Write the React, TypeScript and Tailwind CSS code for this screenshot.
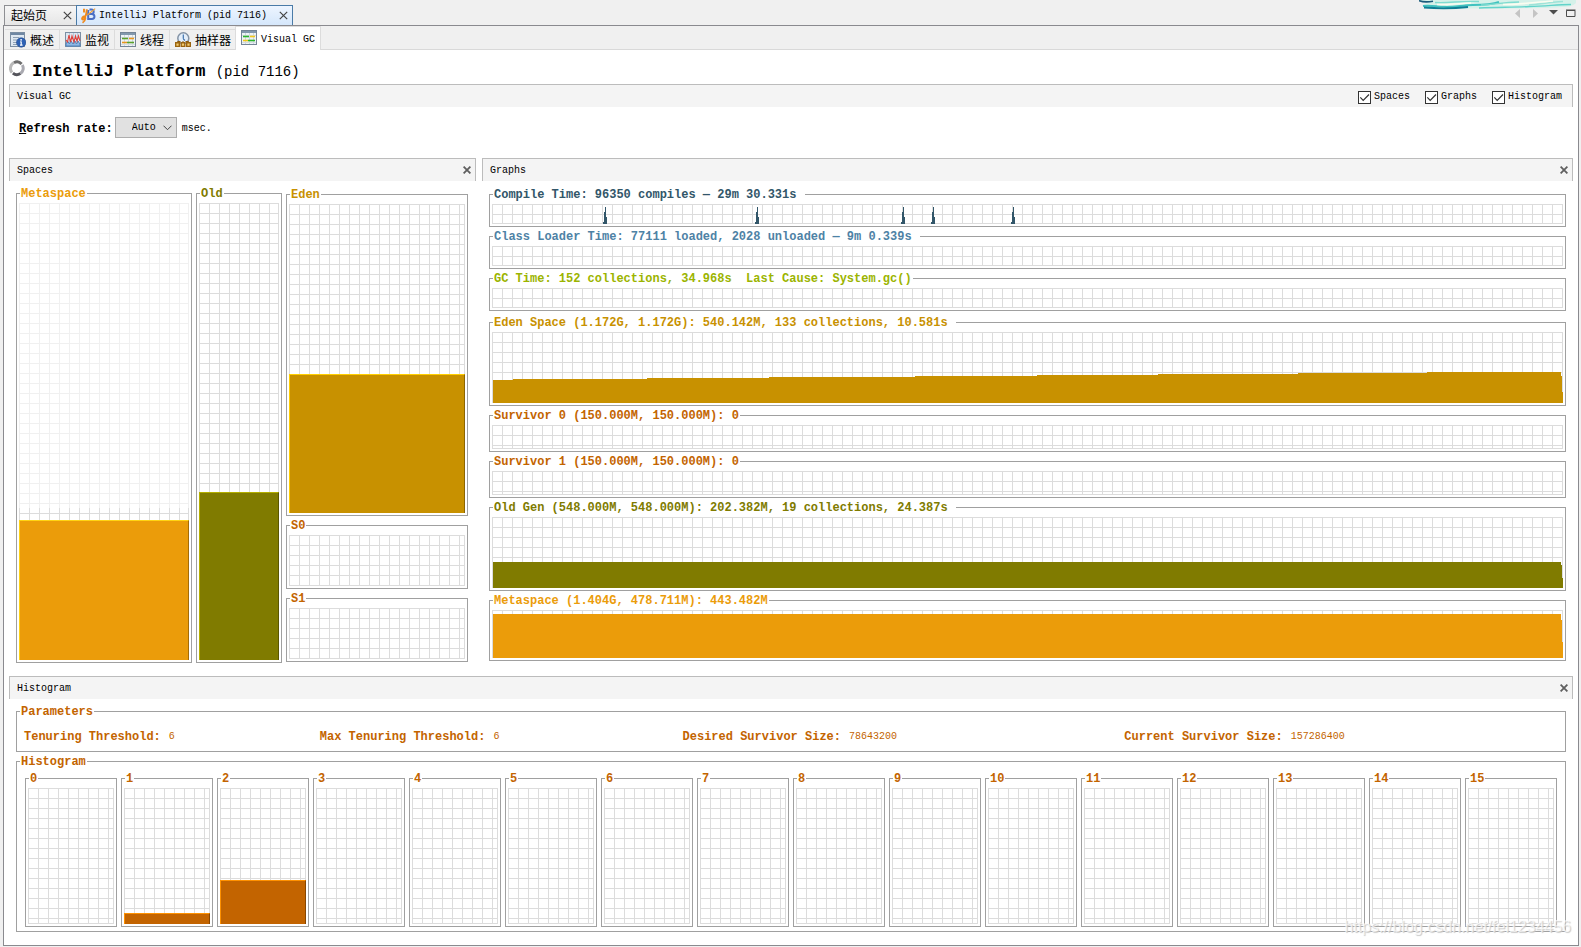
import { ReactNode, useState } from "react";

const GRID =
    "bg-[linear-gradient(to_right,#dcdcdc_1px,transparent_1px),linear-gradient(to_bottom,#dcdcdc_1px,transparent_1px)] bg-[size:10px_10px]";
const GRID_LIGHT =
    "bg-[linear-gradient(to_right,#f0f0f0_1px,transparent_1px),linear-gradient(to_bottom,#f0f0f0_1px,transparent_1px)] bg-[size:10px_10px]";

function Group({
    title,
    color,
    className = "",
    inner = "px-0.5 pt-[3px] pb-0.5",
    children,
}: {
    title: string;
    color: string;
    className?: string;
    inner?: string;
    children: ReactNode;
}) {
    return (
        <fieldset className={`min-w-0 border border-[#a0a0a0] ${className}`}>
            <legend
                className={`ml-[3px] px-px pt-0.5 text-[12px] leading-[11px] font-bold whitespace-pre ${color}`}
            >
                {title}
            </legend>
            <div className={inner}>{children}</div>
        </fieldset>
    );
}

function Grid({ className = "", children }: { className?: string; children?: ReactNode }) {
    return (
        <div
            className={`flex flex-col justify-end shadow-[inset_-1px_-1px_0_#dcdcdc] ${GRID} ${className}`}
        >
            {children}
        </div>
    );
}

function Fill({ percent, className }: { percent: number; className: string }) {
    return <div className={`border-x border-t ${className}`} style={{ height: `${percent}%` }} />;
}

function PanelHeader({ title, children }: { title: string; children?: ReactNode }) {
    return (
        <div className="flex h-[23px] items-center justify-between border-x border-t border-[#bcbcbc] bg-[#f4f4f4] pl-[7px]">
            <h2 className="pt-0.5">{title}</h2>
            {children}
        </div>
    );
}

function CloseButton({ label }: { label: string }) {
    return (
        <button type="button" aria-label={label} className="mr-1">
            <svg width="8" height="8" viewBox="0 0 8 8" stroke="#5f5f5f" strokeWidth="1.8">
                <path d="M.6.6l6.8 6.8M7.4.6L.6 7.4" />
            </svg>
        </button>
    );
}

function Check({ label }: { label: string }) {
    const [on, setOn] = useState(true);
    return (
        <label className="flex items-center gap-[3px]">
            <span className="grid size-[13px]">
                <input
                    type="checkbox"
                    checked={on}
                    onChange={(e) => setOn(e.target.checked)}
                    className="col-start-1 row-start-1 size-[13px] appearance-none border border-[#333333] bg-white"
                />
                {on && (
                    <svg
                        viewBox="0 0 13 13"
                        fill="none"
                        stroke="#333"
                        strokeWidth="1.2"
                        className="pointer-events-none col-start-1 row-start-1 size-[13px]"
                    >
                        <path d="M2.3 6.3l2.9 3L11 3.5" />
                    </svg>
                )}
            </span>
            {label}
        </label>
    );
}

/* ---------- icons ---------- */

function OverviewIcon() {
    return (
        <svg width="16" height="16" viewBox="0 0 16 16">
            <rect x=".5" y=".5" width="14" height="14" fill="#dfe8f1" stroke="#7b8ea3" />
            <path d="M1 1h13v2H1z" fill="#6f87a3" />
            <path d="M3 5.5h6M3 8h4M3 10.5h4M3 12.5h4" stroke="#8fa0b3" />
            <circle cx="11.2" cy="10.5" r="4.7" fill="#2e62b5" stroke="#1d4588" strokeWidth=".6" />
            <path d="M11.2 9.6v3.6M10 13.2h2.6M10.2 9.8h1" stroke="#fff" strokeWidth="1.2" />
            <circle cx="11.1" cy="7.8" r=".9" fill="#fff" />
        </svg>
    );
}

function MonitorIcon() {
    return (
        <svg width="16" height="16" viewBox="0 0 16 16" fill="none">
            <rect x=".5" y=".5" width="15" height="14" fill="#dce6f0" stroke="#7b8ea3" />
            <path d="M4.5 1v13M8.5 1v13M12.5 1v13" stroke="#b9c8d8" />
            <path
                d="M1 12l1.5-3 2 3 1.5-3 2 3 2-3 1.5 3 1.5-3 2 3v2H1z"
                fill="#8fb8e3"
                stroke="#4f82bd"
            />
            <path
                d="M1 8l1.5 2L4 3l1.5 7L7 4l2 6 1.5-6L12 9l1.5-5L15 9"
                stroke="#e0403a"
                strokeWidth="1.1"
            />
        </svg>
    );
}

function ThreadsIcon({ first, second }: { first: string; second: string }) {
    return (
        <svg width="16" height="16" viewBox="0 0 16 16">
            <rect x=".5" y=".5" width="15" height="14" fill="#eef3f6" stroke="#748496" />
            <path d="M1 1h14v2H1z" fill="#8298ad" />
            <path d="M4.5 3v11M8.5 3v11M12.5 3v11" stroke="#cdd7df" />
            <path d="M1 5.5h14M1 12.5h14" stroke="#d5dce2" />
            <path d="M2 6.5h6" stroke={first} strokeWidth="1.6" />
            <path d="M9 6.5h5" stroke={second} strokeWidth="1.6" />
            <path d="M2 10.5h5" stroke={second} strokeWidth="1.6" />
            <path d="M7 10.5h7" stroke={first} strokeWidth="1.6" />
        </svg>
    );
}

function SamplerIcon() {
    return (
        <svg width="16" height="16" viewBox="0 0 16 16" fill="none">
            <circle cx="8.3" cy="6.3" r="5.5" fill="#e3eefa" stroke="#8493a5" strokeWidth="1.5" />
            <path d="M8.3 2.5v4.3M8.3 6.8l1.600 1.700" stroke="#3f72ad" strokeWidth="1.2" />
            <path d="M2.500 11V9.500h3M13.500 11V9.500h-3M8 9v2" stroke="#8c5a0e" />
            <path
                d="M.7 10.800h3.600v3.600H.7zM6.200 10.800h3.600v3.600H6.200zM11.700 10.800h3.600v3.600h-3.600z"
                fill="#f4cd70"
                stroke="#9a6410"
                strokeWidth="1.4"
            />
        </svg>
    );
}

function AppIcon() {
    return (
        <svg width="15" height="16" viewBox="0 0 15 16" fill="none">
            <path
                d="M8.500 1.500h1.800c3.200 0 3.200 4.300 0 4.500H8.600M8.200 6h2.600c3.600.2 3.400 5 .2 5H7.200V2"
                stroke="#4b6fc4"
                strokeWidth="2"
            />
            <path
                d="M3 .8v3.700M5.800 1.200c0 4.500-1 7-2.600 9.300-1.500 2-2.800.6-1.500-1.300 1.200-1.600 2.800-.7 2.600 1.300-.2 2-1.500 3.500-2.800 4.300"
                stroke="#f08a1c"
                strokeWidth="1.900"
            />
            <path d="M6.500 7L14.200.6" stroke="#f4a236" strokeWidth="1.200" />
        </svg>
    );
}

function SpinnerIcon() {
    return (
        <svg width="16" height="17" viewBox="0 0 16 17" fill="none" strokeWidth="3">
            <path d="M3 12.500A6.300 6.300 0 0 1 5 2.700" stroke="#b9b9b9" />
            <path d="M5 2.700a6.300 6.300 0 0 1 7.600 1.300" stroke="#6e6e6e" />
            <path d="M13.300 5a6.300 6.300 0 0 1-2 8.600" stroke="#a9a9b0" />
            <path d="M11.300 13.600a6.300 6.300 0 0 1-7.400-.4" stroke="#55555c" />
        </svg>
    );
}

/* ---------- graphs ---------- */

// x is the left foot of a spike inside the 1071 x 20 plot
const spikes = [111, 263, 409, 439, 519];

function CompilePlot() {
    return (
        <svg
            viewBox="0 0 1071 20"
            preserveAspectRatio="none"
            shapeRendering="crispEdges"
            className="h-full w-full"
            fill="#325669"
        >
            {spikes.map((x) => (
                <path key={x} d={`M${x} 20v-2h1V8h1V3h1v10h1v7z`} />
            ))}
        </svg>
    );
}

// [x where the level starts, level in px from the bottom]
function AreaPlot({ steps, height, color }: { steps: number[][]; height: number; color: string }) {
    const last = steps[steps.length - 1][1];
    let d = `M1 ${height}`;
    steps.forEach(([x, level]) => {
        d += `H${x}V${height - level}`;
    });
    d += `H1069V${height - Math.round(last * 0.87)}H1070V${height - Math.round(last * 0.37)}H1071V${height}z`;
    return (
        <svg
            viewBox={`0 0 1071 ${height}`}
            preserveAspectRatio="none"
            shapeRendering="crispEdges"
            className="h-full w-full"
        >
            <path d={d} fill={color} />
        </svg>
    );
}

const edenSteps = [
    [1, 23],
    [21, 24],
    [155, 25],
    [277, 26],
    [423, 27],
    [545, 28],
    [666, 29],
    [806, 30],
    [935, 31],
];

const parameters = [
    ["Tenuring Threshold:", "6"],
    ["Max Tenuring Threshold:", "6"],
    ["Desired Survivor Size:", "78643200"],
    ["Current Survivor Size:", "157286400"],
];

// fill percentage for each age
const ages = [0, 8.1, 32.4, 0, 0, 0, 0, 0, 0, 0, 0, 0, 0, 0, 0, 0];

const viewTabs = [
    { label: "概述", icon: <OverviewIcon /> },
    { label: "监视", icon: <MonitorIcon /> },
    { label: "线程", icon: <ThreadsIcon first="#5aa02c" second="#e8961e" /> },
    { label: "抽样器", icon: <SamplerIcon /> },
];

function Spaces() {
    return (
        <section className="w-[467px] shrink-0">
            <PanelHeader title="Spaces">
                <CloseButton label="Close Spaces" />
            </PanelHeader>
            <div className="grid grid-cols-[176px_86px_182px] gap-1 pt-1.5 pl-[7px]">
                <Group title="Metaspace" color="text-[#eb9c0a]">
                    <div
                        className={`flex h-[457px] flex-col justify-end shadow-[inset_-1px_0_0_#f0f0f0] ${GRID_LIGHT}`}
                    >
                        <div
                            className={`flex h-[152px] flex-col justify-end bg-white bg-position-[0_5px] shadow-[inset_-1px_0_0_#dcdcdc] ${GRID}`}
                        >
                            <Fill
                                percent={92.1}
                                className="border-t-[#ffd314] border-r-[#a46c06] border-l-[#ffd314] bg-[#eb9c0a]"
                            />
                        </div>
                    </div>
                </Group>
                <Group title="Old" color="text-[#807b00]">
                    <Grid className="h-[457px]">
                        <Fill
                            percent={36.8}
                            className="border-t-[#b5af00] border-r-[#5a5600] border-l-[#b5af00] bg-[#807b00]"
                        />
                    </Grid>
                </Group>
                <div className="flex flex-col gap-[3px] py-px">
                    <Group title="Eden" color="text-[#c89100]">
                        <Grid className="h-[309px]">
                            <Fill
                                percent={45}
                                className="border-t-[#ffce00] border-r-[#8c6500] border-l-[#ffce00] bg-[#c89100]"
                            />
                        </Grid>
                    </Group>
                    <Group title="S0" color="text-[#c36400]">
                        <Grid className="h-[51px]" />
                    </Group>
                    <Group title="S1" color="text-[#c36400]">
                        <Grid className="h-[51px]" />
                    </Group>
                </div>
            </div>
        </section>
    );
}

function Graphs() {
    return (
        <section className="min-w-0 flex-1">
            <PanelHeader title="Graphs">
                <CloseButton label="Close Graphs" />
            </PanelHeader>
            <div className="flex flex-col gap-[3px] px-[7px] pt-[7px]">
                <Group
                    title="Compile Time: 96350 compiles — 29m 30.331s "
                    color="text-[#325669]"
                >
                    <Grid className="h-5">
                        <CompilePlot />
                    </Grid>
                </Group>
                <Group
                    title="Class Loader Time: 77111 loaded, 2028 unloaded — 9m 0.339s "
                    color="text-[#4e82a5]"
                >
                    <Grid className="h-5" />
                </Group>
                <Group
                    title="GC Time: 152 collections, 34.968s  Last Cause: System.gc()"
                    color="text-[#9bb400]"
                >
                    <Grid className="h-5" />
                </Group>
                <Group
                    title="Eden Space (1.172G, 1.172G): 540.142M, 133 collections, 10.581s "
                    color="text-[#c89100]"
                    className="mt-0.5"
                >
                    <Grid className="h-[71px]">
                        <AreaPlot steps={edenSteps} height={71} color="#c89100" />
                    </Grid>
                </Group>
                <Group title="Survivor 0 (150.000M, 150.000M): 0" color="text-[#c36400]">
                    <Grid className="h-6" />
                </Group>
                <Group title="Survivor 1 (150.000M, 150.000M): 0" color="text-[#c36400]">
                    <Grid className="h-6" />
                </Group>
                <Group
                    title="Old Gen (548.000M, 548.000M): 202.382M, 19 collections, 24.387s "
                    color="text-[#807b00]"
                >
                    <Grid className="h-[71px]">
                        <AreaPlot steps={[[1, 26]]} height={71} color="#807b00" />
                    </Grid>
                </Group>
                <Group title="Metaspace (1.404G, 478.711M): 443.482M" color="text-[#eb9c0a]">
                    <Grid className="h-12">
                        <AreaPlot steps={[[1, 44]]} height={48} color="#eb9c0a" />
                    </Grid>
                </Group>
            </div>
        </section>
    );
}

function Histogram() {
    return (
        <section className="mt-[13px]">
            <PanelHeader title="Histogram">
                <CloseButton label="Close Histogram" />
            </PanelHeader>
            <div className="flex flex-col gap-[3px] px-[7px] pt-1.5">
                <Group
                    title="Parameters"
                    color="text-[#c36400]"
                    inner="pt-[11px] pb-1.5 pl-[7px]"
                >
                    <dl className="grid grid-cols-[296fr_363fr_442fr_441fr] leading-4 text-[#c36400]">
                        {parameters.map(([name, value]) => (
                            <div key={name} className="flex gap-2">
                                <dt className="text-[12px] font-bold">{name}</dt>
                                <dd>{value}</dd>
                            </div>
                        ))}
                    </dl>
                </Group>
                <Group title="Histogram" color="text-[#c36400]" inner="px-2 py-1">
                    <div className="grid grid-cols-16 gap-1">
                        {ages.map((percent, age) => (
                            <Group key={age} title={String(age)} color="text-[#c36400]">
                                <Grid className="h-[136px]">
                                    {percent > 0 && (
                                        <Fill
                                            percent={percent}
                                            className="border-t-[#ff9100] border-r-[#884600] border-l-[#ff9100] bg-[#c36400]"
                                        />
                                    )}
                                </Grid>
                            </Group>
                        ))}
                    </div>
                </Group>
            </div>
        </section>
    );
}

function TabClose() {
    return (
        <svg width="9" height="9" viewBox="0 0 9 9" stroke="#444" strokeWidth="1.2">
            <path d="M.8.8l7.4 7.4M8.2.8L.8 8.2" />
        </svg>
    );
}

function WindowTabs() {
    return (
        <div className="flex h-5 items-stretch pl-px">
            <div className="flex w-[72px] items-center justify-between border-t border-l border-[#8e8f93] bg-linear-to-b from-[#f6f6f6] to-[#e6e6e6] pr-1 pl-1.5">
                <button type="button" className="pt-0.5 text-[12px]">
                    起始页
                </button>
                <button type="button" aria-label="Close start page">
                    <TabClose />
                </button>
            </div>
            <div className="flex items-center border-x border-t border-[#4a7ba7] bg-linear-to-b from-[#edf5ff] to-[#d5e7fb] pr-1 pl-1">
                <AppIcon />
                <button type="button" className="ml-[3px]">
                    IntelliJ Platform (pid 7116)
                </button>
                <button type="button" aria-label="Close IntelliJ Platform" className="ml-3">
                    <TabClose />
                </button>
            </div>
        </div>
    );
}

function TabControls() {
    return (
        <svg width="61" height="9" viewBox="0 0 61 9" className="shrink-0">
            <path d="M5 0v9L0 4.5z" fill="#c4c4c4" />
            <path d="M18 0v9l5-4.5z" fill="#c4c4c4" />
            <path d="M34 1h9l-4.5 4.5z" fill="#4d4d4d" />
            <path d="M51.5 1.5H60v6h-8.500zM51 1h9.500" fill="none" stroke="#4d4d4d" />
        </svg>
    );
}

// strip of brush-painted water hanging from the top edge
function Banner() {
    return (
        <svg
            width="158"
            height="10"
            viewBox="0 0 158 10"
            fill="none"
            className="absolute top-0 right-1"
        >
            <path
                d="M0 0h157v3c-3 3-8 4-14 4-16 1.500-30 1-44 1.500-24 .5-40-.5-60 .5-12 .5-24 .5-31-.5L3 5l6-2-7-1z"
                fill="#d5f1e9"
            />
            <path d="M0 .6c4 1.600 9 1.600 14 .6" stroke="#1c5c7c" strokeWidth="1.600" />
            <path d="M4 6c10-1 14 1 24 1s16-2 26-2 18 0 26-3" stroke="#3fc2bf" strokeWidth="2" />
            <path d="M5 7.500c12 1 26 1.500 44-.5" stroke="#0f7f95" strokeWidth="1.800" />
            <path d="M16 2.500c14 1 26-2 44-1M62 5c14 0 20-3 38-3" stroke="#7fdcd0" strokeWidth="1.400" />
            <path d="M60 8c20-1 34-.5 50-1.500 18 0 26-2 42-2" stroke="#62d3ca" strokeWidth="1.300" />
            <path d="M110 5c10 0 18-3 34-3.500" stroke="#9ee3d8" strokeWidth="1.500" />
            <path d="M18 4.500c12 .5 22-1 34-1.500M84 4.500c16 0 30-2 50-3.500" stroke="#fbfdf0" strokeWidth="1.600" />
        </svg>
    );
}

export default function App() {
    return (
        <div className="relative min-h-screen bg-[#f0f0f0] pt-[5px] pr-0.5 pb-px pl-[3px] font-['Liberation_Mono','Noto_Sans_CJK_SC',monospace] text-[10px] leading-4 text-black">
            <div className="flex items-start justify-between">
                <WindowTabs />
                <div className="pt-1 pr-[3px]">
                    <TabControls />
                </div>
            </div>
            <Banner />

            <main className="border border-[#8a8a8f] bg-white">
                <nav className="flex h-6 items-end border-b border-[#d9d9d9] bg-[#f0f0f0] pl-px">
                    {viewTabs.map((tab) => (
                        <button
                            key={tab.label}
                            type="button"
                            className="flex h-5 items-center gap-1 border-t border-r border-[#dcdcdc] px-[5px] text-[12px]"
                        >
                            {tab.icon}
                            <span className="pt-1">{tab.label}</span>
                        </button>
                    ))}
                    <button
                        type="button"
                        className="-mb-px -ml-0.5 flex h-6 items-center gap-1 border-x border-t border-[#dcdcdc] bg-white px-[5px] pb-0.5"
                    >
                        <ThreadsIcon first="#2bb52b" second="#f0c81e" />
                        <span className="pt-1">Visual GC</span>
                    </button>
                </nav>

                <div className="px-[5px] pb-[13px]">
                    <header className="flex h-[34px] items-center gap-[7px] pt-0.5">
                        <SpinnerIcon />
                        <h1 className="pt-2 text-[17px] leading-6 font-bold whitespace-pre">
                            IntelliJ Platform{" "}
                            <span className="text-[14px] font-normal">(pid 7116)</span>
                        </h1>
                    </header>

                    <PanelHeader title="Visual GC">
                        <div className="flex gap-[15px] pt-0.5 pr-2.5">
                            <Check label="Spaces" />
                            <Check label="Graphs" />
                            <Check label="Histogram" />
                        </div>
                    </PanelHeader>

                    <div className="flex items-center pt-2.5 pb-5 pl-2.5">
                        <label htmlFor="rate" className="pt-0.5 text-[12px] font-bold">
                            <span className="underline">R</span>efresh rate:
                        </label>
                        <div className="ml-0.5 grid items-center">
                            <select
                                id="rate"
                                className="col-start-1 row-start-1 h-[21px] w-[62px] appearance-none border border-[#adadad] bg-[#e1e1e1] pl-4"
                            >
                                <option>Auto</option>
                            </select>
                            <svg
                                width="9"
                                height="6"
                                viewBox="0 0 9 6"
                                fill="none"
                                stroke="#444"
                                className="pointer-events-none col-start-1 row-start-1 mr-[5px] justify-self-end"
                            >
                                <path d="M.5.7l4 4 4-4" />
                            </svg>
                        </div>
                        <span className="ml-[5px] pt-0.5">msec.</span>
                    </div>

                    <div className="flex gap-1.5">
                        <Spaces />
                        <Graphs />
                    </div>
                    <Histogram />
                </div>
            </main>

            <div className="pointer-events-none absolute right-2.5 bottom-2.5 font-['Liberation_Sans',sans-serif] text-[16px] leading-5 text-white/70 [text-shadow:1px_1px_1px_#c8c8c8]">
                https://blog.csdn.net/fei1234456
            </div>
        </div>
    );
}
